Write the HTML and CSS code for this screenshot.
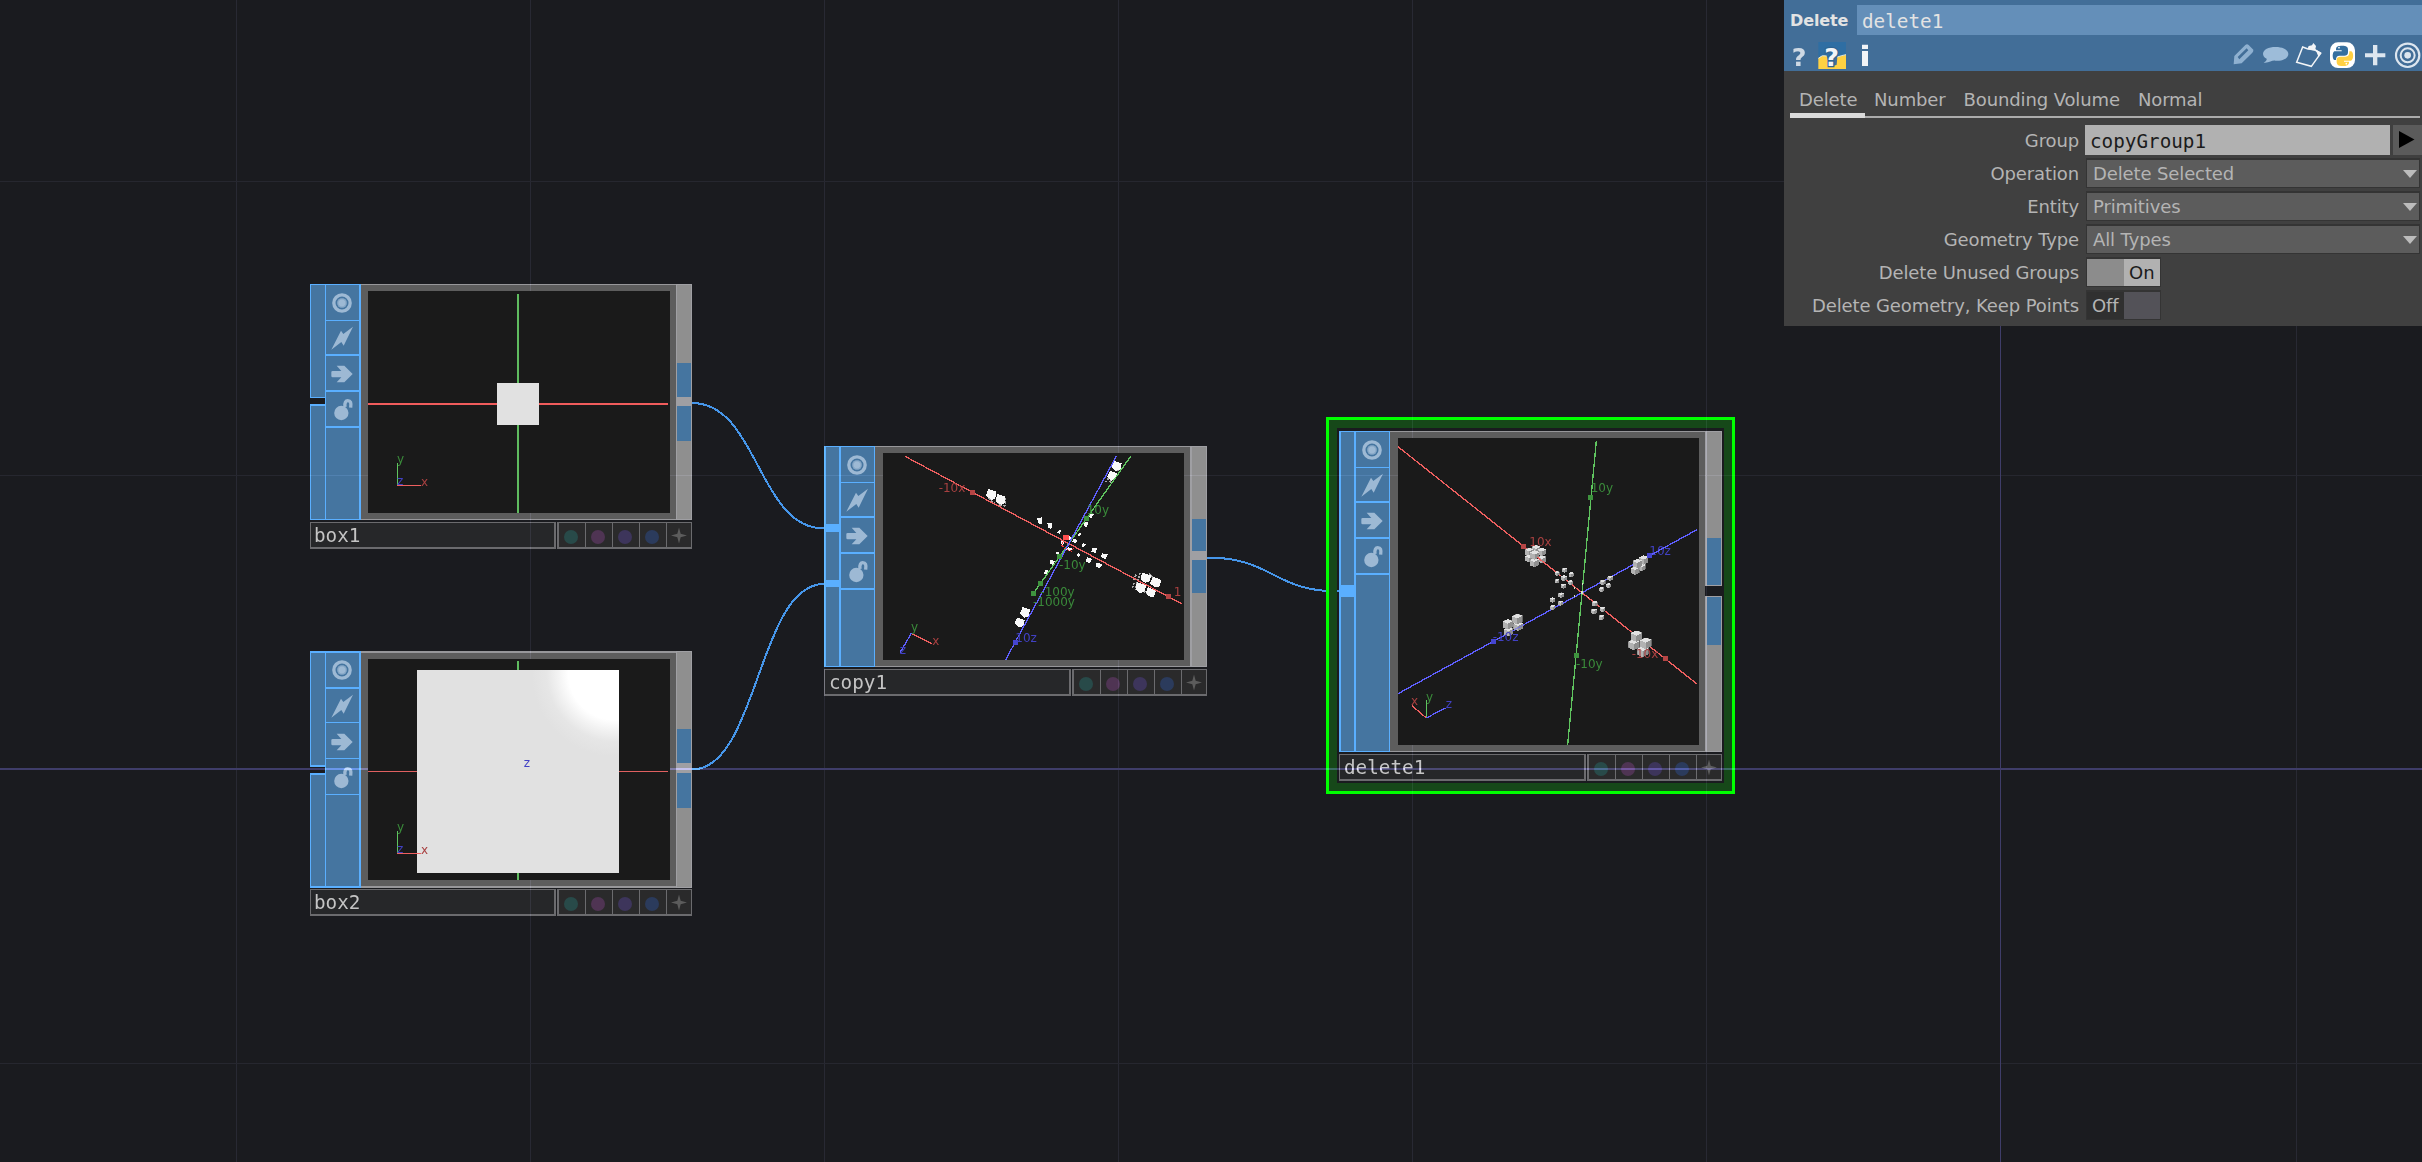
FILE: index.html
```html
<!DOCTYPE html>
<html lang="en">
<head>
<meta charset="utf-8">
<title>Network editor</title>
<link rel="stylesheet" href="styles.css">
</head>
<body>
<svg class="defs" width="0" height="0" aria-hidden="true">
  <symbol id="i-view" viewBox="0 0 72 72"><circle cx="36" cy="36" r="24.5" fill="none" stroke="currentColor" stroke-width="10"/><circle cx="36" cy="36" r="14.5" fill="currentColor"/><circle cx="36" cy="36" r="12.5" fill="none" stroke="#4575a0" stroke-width="2" opacity=".55"/></symbol>
  <symbol id="i-bolt" viewBox="0 0 72 72"><path d="M4 71 33 14 40 24 69 2 41 59 34 48Z" fill="currentColor"/></symbol>
  <symbol id="i-arrow" viewBox="0 0 72 72"><path d="M4 30Q4 27 8 27H34L20 11H43L68 36 43 61H20L34 46H8Q4 46 4 42Z" fill="currentColor"/></symbol>
  <symbol id="i-lock" viewBox="0 0 72 72"><circle cx="34" cy="48" r="21.500" fill="currentColor"/><path d="M45 30C43 16 48 11 53 11C62 11 64 16 62 32" fill="none" stroke="currentColor" stroke-width="10"/></symbol>
  <symbol id="i-star" viewBox="0 0 48 48"><path d="M24 0 29 19 48 24 29 29 24 48 19 29 0 24 19 19Z" fill="#5c5c5c"/></symbol>
  <symbol id="cube" viewBox="0 0 20 20"><path d="M10 0 20 3V15L10 20 0 15V4Z" fill="#8f8f8f"/><path d="M10 9V20L0 16V5Z" fill="#b2b2b2"/><path d="M10 0 20 4 10 9 0 5Z" fill="#e2e2e2"/></symbol>
</svg>

<main class="network">
  <svg class="wires" viewBox="0 0 2422 1162">
    <path d="M692 403C758 403 758 528.500 824 528.500"/>
    <path d="M692 769.500C758 769.500 758 584 824 584"/>
    <path d="M1207 557.500C1273 557.500 1273 591.500 1339 591.500"/>
  </svg>

  <section class="node box1">
    <div class="body">
      <div class="rail split"><i></i><i></i></div>
      <div class="flags"><b><svg><use href="#i-view"/></svg></b><b><svg><use href="#i-bolt"/></svg></b><b><svg><use href="#i-arrow"/></svg></b><b><svg><use href="#i-lock"/></svg></b></div>
      <div class="frame">
        <svg class="viewer" viewBox="204 63 906 666" preserveAspectRatio="none">
          <path d="M651 72h6v657h-6z" fill="#5fbb5f"/><path d="M204 399h900v6H204z" fill="#f05c5c"/>
          <path d="M591 339h126v126H591z" fill="#e1e1e1"/>
          <path d="M292.500 579V646" class="ay"/><path d="M291 646.500H363" class="ax"/>
          <text x="291" y="579" class="ty">y</text><text x="363" y="647" class="tx">x</text><text x="291" y="646" class="tz">z</text>
        </svg>
      </div>
      <div class="out"><i></i><s></s><i></i></div>
    </div>
    <div class="foot"><span class="name">box1</span><div class="dots"><i class="d1"></i><i class="d2"></i><i class="d3"></i><i class="d4"></i><i><svg><use href="#i-star"/></svg></i></div></div>
  </section>

  <section class="node box2">
    <div class="body">
      <div class="rail split"><i></i><i></i></div>
      <div class="flags"><b><svg><use href="#i-view"/></svg></b><b><svg><use href="#i-bolt"/></svg></b><b><svg><use href="#i-arrow"/></svg></b><b><svg><use href="#i-lock"/></svg></b></div>
      <div class="frame">
        <svg class="viewer" viewBox="204 57 906 663" preserveAspectRatio="none">
          <defs><radialGradient id="shine" gradientUnits="userSpaceOnUse" cx="945" cy="100" r="250"><stop offset="0" stop-color="#fff"/><stop offset=".56" stop-color="#fff"/><stop offset=".68" stop-color="#f3f3f3"/><stop offset=".82" stop-color="#e6e6e6"/><stop offset="1" stop-color="#e1e1e1"/></radialGradient></defs>
          <path d="M651 63h6v657h-6z" fill="#5fbb5f"/><path d="M204 393h900v3H204z" fill="#e06060"/>
          <path d="M351 90h606v609H351z" fill="url(#shine)"/>
          <path d="M292.500 573V640" class="ay"/><path d="M291 640.500H363" class="ax"/>
          <text x="291" y="573" class="ty">y</text><text x="363" y="641" class="tx">x</text><text x="291" y="640" class="tz">z</text><text x="671" y="380" class="tz">z</text>
        </svg>
      </div>
      <div class="out"><i></i><s></s><i></i></div>
    </div>
    <div class="foot"><span class="name">box2</span><div class="dots"><i class="d1"></i><i class="d2"></i><i class="d3"></i><i class="d4"></i><i><svg><use href="#i-star"/></svg></i></div></div>
  </section>

  <section class="node copy1">
    <div class="body">
      <div class="rail inputs"><u></u><u></u></div>
      <div class="flags"><b><svg><use href="#i-view"/></svg></b><b><svg><use href="#i-bolt"/></svg></b><b><svg><use href="#i-arrow"/></svg></b><b><svg><use href="#i-lock"/></svg></b></div>
      <div class="frame">
        <svg class="viewer" viewBox="207 51 903 621" preserveAspectRatio="none">
          <g class="copies">
            <path class="side" d="M519 178l12 16 12 8M548 188l8 18 20 4M574 186v24M903 96l12 8M880 126l12 14M890 118l-14 20M966 416l-6 18M960 440l-6 20M978 410l-6 24M970 440l-6 22M980 460l34 20M1004 412l16 14"/>
            <path d="M522 159l24 8-2 20-10 6-18-14zM550 174l24 8-2 20-10 4-18-10zM900 75l23 7-4 18-14 5-12-12zM888 104l22 8-5 18-12 4-13-12z"/>
            <path d="M670 247l14-3v22l-12-4zM700 262l14-2-2 20-10-6zM732 284l10-2-6 12-6-4zM826 230l14 4-8 12-10-4zM812 256l12 4-6 14-10-6zM798 290l6 4-8 8-6-4zM728 346l8 2-2 10-8-4zM710 372l13 3-6 12-11-5zM694 401l12 4-6 13-10-6zM808 322l8 3-8 8-6-3zM834 335l16 2-6 14-12-4zM864 352l18 3-8 14-14-6zM794 352l6 2-6 8-6-4zM820 364l14 4-6 14-14-6zM848 379l17 6-8 12-13-6z"/>
            <path d="M985 410l26 8-4 18-14 4-14-10zM1018 422l24 10-6 20-14 2-14-12zM968 438l28 10-4 18-14 6-12-10zM1002 453l24 12-6 18-16-2-8-12zM626 513l22 8-4 20-14 4-12-12zM609 544l23 8-4 18-12 4-14-12z"/>
            <path d="M758 298l18 6-6 8-14-5zM744 312l8 2-6 16-6-8zM778 308l12 4-5 10-10-4zM762 334l14 4-8 8-12-4z"/>
          </g>
          <path class="ax" d="M273 61 1104 504"/><path class="ay" d="M950 61 657 474"/><path class="az" d="M907 61 575 671"/>
          <path d="M748 297h17v16h-17z" fill="#ff5050"/><path d="M745 318l-1 10 12 12 18 6 6-16" fill="none" stroke="#f03c3c" stroke-width="3" stroke-dasharray="6 4"/>
          <g class="mx"><path d="M468 162h15v15h-15zM1056 474h15v15h-15z"/></g>
          <g class="my"><path d="M810 240h15v15h-15zM729 355h15v15h-15zM672 435h15v15h-15zM651 465h15v15h-15z"/></g>
          <path d="M597 612h15v15h-15z" class="mz"/>
          <text x="374" y="168" class="tx">-10x</text><text x="1079" y="480" class="tx">1</text>
          <text x="818" y="233" class="ty">10y</text><text x="735" y="399" class="ty">-10y</text><text x="679" y="480" class="ty">-100y</text><text x="657" y="510" class="ty">-1000y</text><text x="604" y="618" class="tz">10z</text>
          <path d="M292 592 354 623" class="ax"/><path d="M292 592 258 650" class="az"/>
          <text x="291" y="585" class="ty">y</text><text x="355" y="627" class="tx">x</text><text x="257" y="653" class="tz">z</text>
        </svg>
      </div>
      <div class="out"><i></i><s></s><i></i></div>
    </div>
    <div class="foot"><span class="name">copy1</span><div class="dots"><i class="d1"></i><i class="d2"></i><i class="d3"></i><i class="d4"></i><i><svg><use href="#i-star"/></svg></i></div></div>
  </section>

  <div class="selection"></div>
  <section class="node delete1">
    <div class="body">
      <div class="rail inputs"><u></u></div>
      <div class="flags"><b><svg><use href="#i-view"/></svg></b><b><svg><use href="#i-bolt"/></svg></b><b><svg><use href="#i-arrow"/></svg></b><b><svg><use href="#i-lock"/></svg></b></div>
      <div class="frame">
        <svg class="viewer" viewBox="234 84 903 921" preserveAspectRatio="none">
          <text x="628" y="407" class="tx">10x</text><text x="988" y="435" class="tz">10z</text>
          <path class="ax" d="M234 110 1131 822"/><path class="ay" d="M829 93 743 1005"/><path class="az" d="M234 851 1131 359"/>
          <g class="cubes">
            <use href="#cube" x="635" y="402" width="26" height="32"/><use href="#cube" x="615" y="410" width="26" height="32"/><use href="#cube" x="653" y="412" width="25" height="28"/><use href="#cube" x="615" y="430" width="24" height="30"/><use href="#cube" x="654" y="434" width="24" height="28"/><use href="#cube" x="629" y="442" width="28" height="31"/><use href="#cube" x="630" y="420" width="28" height="30"/>
            <use href="#cube" x="704" y="482" width="15" height="17"/><use href="#cube" x="726" y="472" width="15" height="17"/><use href="#cube" x="746" y="485" width="16" height="18"/><use href="#cube" x="704" y="505" width="14" height="17"/><use href="#cube" x="723" y="495" width="18" height="19"/><use href="#cube" x="744" y="510" width="16" height="16"/><use href="#cube" x="722" y="520" width="16" height="17"/>
            <use href="#cube" x="690" y="561" width="16" height="18"/><use href="#cube" x="714" y="547" width="18" height="17"/><use href="#cube" x="714" y="571" width="16" height="17"/><use href="#cube" x="690" y="583" width="16" height="18"/>
            <use href="#cube" x="840" y="508" width="17" height="18"/><use href="#cube" x="862" y="496" width="17" height="18"/><use href="#cube" x="858" y="518" width="16" height="18"/><use href="#cube" x="837" y="529" width="16" height="19"/>
            <use href="#cube" x="816" y="571" width="17" height="20"/><use href="#cube" x="839" y="589" width="17" height="18"/><use href="#cube" x="813" y="595" width="18" height="19"/><use href="#cube" x="836" y="613" width="17" height="19"/>
            <use href="#cube" x="953" y="458" width="24" height="28"/><use href="#cube" x="957" y="435" width="28" height="30"/><use href="#cube" x="933" y="466" width="26" height="31"/><use href="#cube" x="938" y="445" width="28" height="31"/>
            <use href="#cube" x="580" y="632" width="29" height="34"/><use href="#cube" x="576" y="608" width="32" height="38"/><use href="#cube" x="552" y="648" width="28" height="34"/><use href="#cube" x="548" y="624" width="31" height="38"/>
            <use href="#cube" x="925" y="686" width="34" height="35"/><use href="#cube" x="932" y="660" width="34" height="37"/><use href="#cube" x="952" y="706" width="34" height="37"/><use href="#cube" x="960" y="682" width="35" height="36"/>
          </g>
          <path d="M652 442 700 480" class="ax"/><path d="M575 664 606 647" class="az" opacity=".5"/>
          <path d="M784 544h6v7h-6zM786 519h3v5h-3zM803 560h4v4h-4zM763 556h3v4h-3zM763 530h3v6h-3z" fill="#d7e6c8"/>
          <path class="mx" d="M603 402h15v15h-15zM1029 738h15v15h-15z"/><path class="my" d="M804 255h15v15h-15zM762 729h15v15h-15z"/><path class="mz" d="M981 429h15v15h-15zM513 686h15v15h-15z"/>
          <text x="812" y="247" class="ty">10y</text><text x="768" y="773" class="ty">-10y</text><text x="518" y="693" class="tz">-10z</text><text x="935" y="743" class="tx">-10x</text>
          <path d="M319 924V870" class="ay"/><path d="M319 924 275 886" class="ax"/><path d="M319 924 376 894" class="az"/>
          <text x="318" y="872" class="ty">y</text><text x="273" y="885" class="tx">x</text><text x="377" y="893" class="tz">z</text>
        </svg>
      </div>
      <div class="out open"><i></i><s></s><i></i></div>
    </div>
    <div class="foot"><span class="name">delete1</span><div class="dots"><i class="d1"></i><i class="d2"></i><i class="d3"></i><i class="d4"></i><i><svg><use href="#i-star"/></svg></i></div></div>
  </section>

  <svg class="gridlines" viewBox="0 0 2422 1162">
    <path class="v" d="M236.500 0V1162M530.500 0V1162M824.500 0V1162M1118.500 0V1162M1412.500 0V1162M1706.500 0V1162M2296.500 0V1162"/>
    <path class="h" d="M0 181.500H2422M0 475.500H2422M0 1063.500H2422"/>
    <path class="axis" d="M0 769H2422"/><path class="axis thin" d="M2000.500 0V1162"/>
  </svg>
</main>

<aside class="panel">
  <header>
    <div class="title"><strong>Delete</strong><span class="field">delete1</span></div>
    <div class="tools">
      <svg width="78" height="30" viewBox="0 0 234 90" class="help">
        <text x="-1" y="71" class="q" opacity=".8">?</text>
        <path d="M79 0h83v45H79z" fill="#2f6ea3"/><path d="M79 49Q90 37 104 42L110 62Q118 76 134 68L136 45Q150 40 162 38V81H79Z" fill="#ffd142"/>
        <path d="M79 49Q90 37 104 42M136 45Q150 40 162 38" fill="none" stroke="#dfe7dc" stroke-width="3"/><text x="97" y="71" class="q edge">?</text>
        <path d="M210 8h18v13h-18zM210 27h18v45h-18z" fill="#f2f4f7"/>
      </svg>
      <svg width="190" height="30" viewBox="396 120 570 90">
        <path d="M401 193 403 168 436 135Q441 131 446 135L460 149Q461 154 457 158L425 190ZM413 171 418 178 445 151 440 145Z" fill="#8eb0d0" fill-rule="evenodd"/>
        <path d="M527 141C550 141 565 150 565 162C565 175 548 184 526 182C516 180 508 190 491 188Q502 182 500 176C492 172 489 166 489 161C490 149 505 141 527 141Z" fill="#9dbcd9"/>
        <path d="M608 141 590 187 634 199 662 160 645 150 622 146Z" fill="none" stroke="#f3f5f7" stroke-width="4.500"/><path d="M622 148 626 138 636 136 640 129 648 138 646 148 664 158 656 172 648 152Z" fill="#f3f5f7"/>
        <rect x="690" y="127" width="75" height="77" rx="24" fill="#fff"/>
        <path d="M708 148C708 139 714 137 727 137C739 137 744 140 744 149V157C744 165 739 167 733 167H719C711 167 708 171 708 180H703C697 178 696 158 703 154H725V151H708Z" fill="#356f9f"/><circle cx="717" cy="143" r="2.500" fill="#fff"/>
        <path d="M748 154H754C762 158 761 180 753 182H732V185H747C748 195 740 198 728 198C714 198 710 193 710 185V179C710 172 715 170 721 170H736C744 170 748 166 748 154Z" fill="#ffd043"/><circle cx="739" cy="191" r="2.500" fill="#fff"/>
        <path d="M819 135h13v25h24v12h-24v24h-13v-24h-24v-12h24z" fill="#dde6ef"/>
        <g fill="none" stroke="#dde6ef"><circle cx="923" cy="166" r="35" stroke-width="6.500"/><circle cx="923" cy="166" r="21" stroke-width="6"/></g><circle cx="923" cy="166" r="10" fill="#dde6ef"/>
      </svg>
    </div>
  </header>
  <nav><a class="active">Delete</a><a>Number</a><a>Bounding Volume</a><a>Normal</a></nav>
  <div class="rows">
    <label>Group</label><div class="group"><span>copyGroup1</span><button><svg width="16" height="17" viewBox="0 0 16 17"><path d="M0 0 15.500 8.500 0 17Z"/></svg></button></div>
    <label>Operation</label><div class="select">Delete Selected</div>
    <label>Entity</label><div class="select">Primitives</div>
    <label>Geometry Type</label><div class="select">All Types</div>
    <label>Delete Unused Groups</label><div class="toggle on"><i></i><span>On</span></div>
    <label>Delete Geometry, Keep Points</label><div class="toggle off"><span>Off</span><i></i></div>
  </div>
</aside>
</body>
</html>
```
FILE: styles.css
```css
* { box-sizing: border-box; }
body { margin: 0; width: 2422px; height: 1162px; overflow: hidden; background: #1a1b1f; font-family: "DejaVu Sans", sans-serif; }
.defs { position: absolute; }
i, b, u, s { font-style: normal; text-decoration: none; display: block; }
.network { position: relative; width: 2422px; height: 1162px; isolation: isolate; background: #1a1b1f; }
.wires, .gridlines { position: absolute; inset: 0; width: 2422px; height: 1162px; fill: none; shape-rendering: crispEdges; }
.wires { stroke: #4696ea; stroke-width: 2; }
.gridlines { z-index: 1; mix-blend-mode: plus-lighter; pointer-events: none; }
.v { stroke: #0e0e14; }
.h { stroke: #0c0c10; }
.axis { stroke: #25224a; stroke-width: 2; }
.axis.thin { stroke-width: 1; }

/* operator nodes */
.node { position: absolute; width: 382px; display: flex; flex-direction: column; justify-content: space-between; }
.box1 { left: 310px; top: 284px; height: 265px; --body: 236px; --seg: 34px; --gap: 9px; --lead: 78px; --seg2: 35px; }
.box2 { left: 310px; top: 651px; height: 265px; --body: 237px; --seg: 34px; --gap: 10px; --lead: 77px; --seg2: 35px; }
.copy1 { left: 824px; top: 446px; width: 383px; height: 250px; --body: 221px; --seg: 32px; --gap: 9px; --lead: 72px; --seg2: 33px; }
.delete1 { left: 1339px; top: 431px; width: 383px; height: 350px; --body: 321px; --seg: 47px; --gap: 12px; --lead: 106px; --seg2: 48px; }
.selection { position: absolute; left: 1326px; top: 417px; width: 409px; height: 377px; border: 3px solid #0f0; box-shadow: inset 0 0 0 8px #164819; }

.body { height: var(--body); display: grid; grid-template-columns: 15px 36px 1fr 16px; }
.copy1 .body, .delete1 .body { grid-template-columns: 16px 35px 1fr 17px; }
.rail { display: flex; flex-direction: column; }
.split { gap: 6px; }
.split i { flex: 1; background: #4575a0; border: 1px solid #5aafff; border-right: 0; }
.split i + i { border-top-width: 2px; }
.box1 .split i:first-child { flex: 0 0 114px; }
.box2 .split i { border-top-width: 2px; border-bottom-width: 2px; }
.inputs { background: #4575a0; border: 1px solid #5aafff; border-left-width: 2px; border-right-width: 1px; }
.inputs u { background: #5aafff; }
.copy1 .inputs u { height: 8px; margin-top: 77px; }
.copy1 .inputs u + u { height: 7px; margin-top: 48px; }
.delete1 .inputs u { height: 12px; margin-top: 153px; }
.flags { background: #4575a0; border: 1px solid #5aafff; border-right-width: 2px; color: #9db9d4; }
.copy1 .flags, .delete1 .flags { border-right-width: 1px; }
.box2 .flags { border-top-width: 2px; border-bottom-width: 2px; }
.flags b { height: 36px; border-bottom: 2px solid #5aafff; display: flex; align-items: center; justify-content: center; }
.flags b:first-child { border-bottom-width: 1px; }
.flags b:nth-child(2) { height: 35px; }
.flags b:nth-child(3) { padding-top: 2px; }
.box2 .flags b { border-bottom-width: 1px; }
.box2 .flags b:first-child { border-bottom-width: 2px; }
.box2 .flags b:nth-child(2) { height: 34px; }
.flags svg { width: 24px; height: 24px; margin-right: 1px; }
.copy1 .flags svg, .delete1 .flags svg { margin-right: 2px; }
.frame { background: #5d5d5d; border: solid #97979a; border-width: 1px 0; padding: 6px 6px 6px 7px; }
.box2 .frame { border-width: 2px 0; padding-bottom: 6px; }
.copy1 .frame, .delete1 .frame { padding: 6px 6px 6px 8px; }
.viewer { display: block; position: relative; z-index: 2; width: 100%; height: 100%; background: #1a1a1a; shape-rendering: crispEdges; }
.out { display: flex; flex-direction: column; background: #8f8f8f; border: 1px solid #9f9fa3; padding-top: var(--lead); }
.copy1 .out, .delete1 .out { border-left-width: 2px; }
.out i { height: var(--seg); background: #4575a0; flex: none; }
.out i:last-child { height: var(--seg2); }
.out s { height: var(--gap); background: #9f9fa3; flex: none; }
.out.open s { background: #1a1b1f; border: solid #9f9fa3; border-width: 1px 0; margin: 0 -1px 0 -2px; }

.foot { height: 27px; display: flex; gap: 1px; }
.name { flex: 1; border: 1px solid #6b6b6e; border-right-width: 2px; border-bottom-width: 2px; background: #262729; color: #c4c4c4; font: 19.300px/25px "DejaVu Sans Mono", monospace; padding-left: 3px; }
.copy1 .name, .delete1 .name { padding-left: 4px; }
.dots { width: 135px; display: grid; grid-template-columns: 27px 27px 27px 27px 24px; background: #2a2a2b; border: 1px solid #6b6b6e; border-bottom-width: 2px; border-left-width: 2px; }
.dots i { border-right: 1px solid #6b6b6e; display: grid; place-items: center; padding-right: 3px; }
.dots i:last-child { border: 0; padding-right: 1px; }
.dots i::before { content: ""; width: 14px; height: 14px; border-radius: 50%; background: var(--c); margin-top: 3px; }
.dots i:last-child::before { display: none; }
.dots svg { width: 16px; height: 17px; }
.d1 { --c: #284a49; } .d2 { --c: #4f3453; } .d3 { --c: #3d355b; } .d4 { --c: #2b3b5c; }

/* viewport drawing */
.ax { stroke: #ee5f5f; } .ay { stroke: #5fc45f; } .az { stroke: #5f5fff; }
.ax, .ay, .az { fill: none; stroke-width: 4; }
.viewer text { font-size: 36px; }
.tx { fill: #a84040; } .ty { fill: #3a8a3a; } .tz { fill: #4141c4; }
.mx { fill: #b54545; } .my { fill: #3e933e; } .mz { fill: #4545d2; }
.copies path { fill: #f8f8f8; }
.copies .side { fill: none; stroke: #aaa; stroke-width: 5; stroke-dasharray: 7 3; }

/* parameter panel */
.panel { position: absolute; z-index: 3; right: 0; top: 0; width: 638px; height: 326px; background: #404040; color: #b4b4b4; font-size: 18px; letter-spacing: -0.120px; }
.panel header { height: 71px; background: #426e98; padding-top: 5px; }
.title { display: flex; height: 30px; color: #e3e3e3; }
.title strong { width: 73px; padding-left: 6px; font-size: 16px; line-height: 32px; }
.field { flex: 1; background: #648fb9; padding-left: 5px; font: 19.300px/33px "DejaVu Sans Mono", monospace; letter-spacing: 0; }
.tools { display: flex; justify-content: space-between; padding: 5px 0 0 8px; height: 36px; }
.tools .help { margin-top: 2px; }
.q { font: bold 76px "DejaVu Sans", sans-serif; fill: #f2f4f7; }
.edge { stroke: #2f6593; stroke-width: 7; paint-order: stroke; }
nav { display: flex; height: 47px; margin: 0 2px 0 6px; border-bottom: 2px solid #acacac; }
nav a { padding: 17px 9px 0 9px; height: 47px; line-height: 24px; }
nav .active { width: 75px; border-bottom: 5px solid #dadada; }
.rows { display: grid; grid-template-columns: 295px 1fr; grid-auto-rows: 33px; padding-top: 7px; }
.rows label { text-align: right; line-height: 32px; white-space: nowrap; }
.rows > div { margin-left: 7px; height: 30px; }
.rows .group { margin-left: 6px; display: flex; gap: 3px; }
.group span { width: 305px; background: #b1b1b1; color: #1c1c1c; font: 19.300px/33px "DejaVu Sans Mono", monospace; letter-spacing: 0; padding-left: 5px; }
.group button { width: 29px; border: 0; background: #5b5b5b; padding: 1px 2px 0 0; }
.select { margin-right: 2px; background: #5c5c5c; border: 1px solid #343434; border-top-width: 2px; line-height: 29px; padding: 0 2px 0 6px; display: flex; justify-content: space-between; align-items: center; }
.select::after { content: ""; border: 7px solid transparent; border-top: 8px solid #bcbcbc; border-bottom: 0; }
.toggle { width: 75px; display: flex; border: 1px solid #343434; border-top-width: 2px; line-height: 28px; }
.toggle > * { flex: 1; text-align: center; }
.on i { background: #8c8c8c; } .on span { background: #b1b1b1; color: #1c1c1c; }
.off span { background: #303030; } .off i { background: #535258; }
```
